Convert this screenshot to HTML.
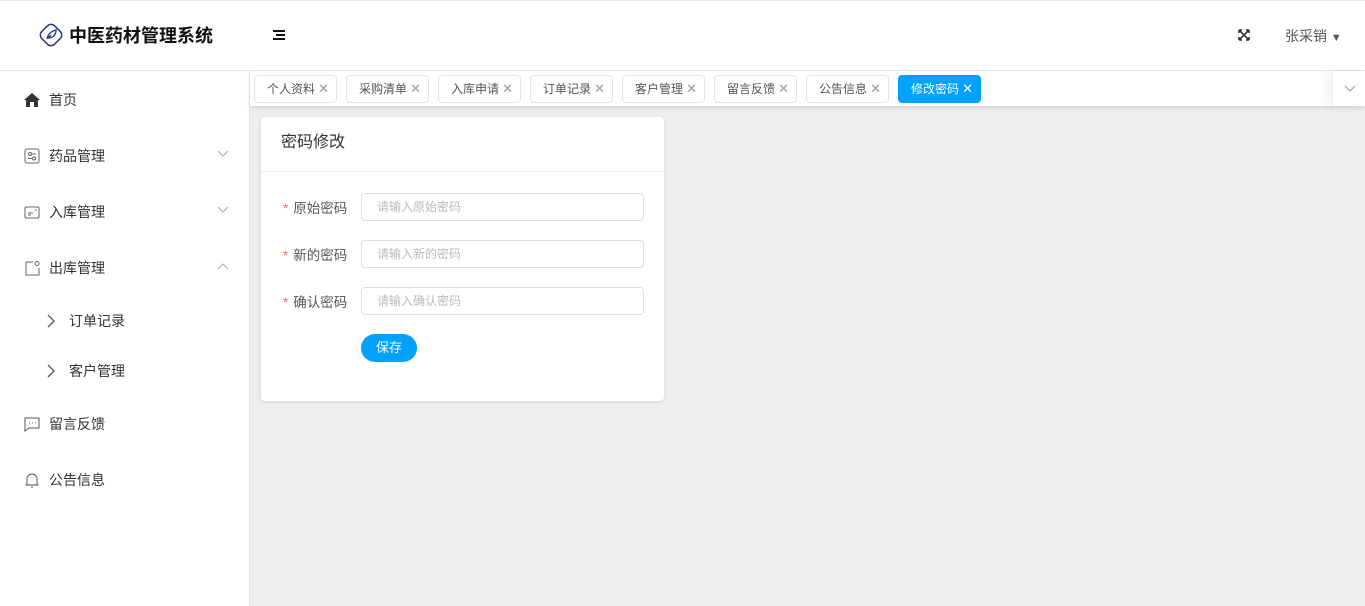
<!DOCTYPE html>
<html><head><meta charset="utf-8"><style>
*{box-sizing:border-box;margin:0;padding:0}
body{width:1365px;height:606px;overflow:hidden;font-family:"Liberation Sans","Noto Sans CJK SC",sans-serif;background:#eeeeee;position:relative;font-size:14px;color:#333}
.top{position:absolute;left:0;top:0;width:1365px;height:71px;background:#fff;border-top:1px solid #e6e6e6;border-bottom:1px solid #e6e6e6}
.side{position:absolute;left:0;top:71px;width:250px;height:535px;background:#fff;border-right:1px solid #e6e6e6}
.logo{position:absolute;left:35px;top:18px;display:flex;align-items:center;font-size:18px;font-weight:bold;color:#111}
.logo svg{margin-right:2px}
.item{position:absolute;left:24px;display:flex;align-items:center;font-size:14px;color:#333}
.item svg{margin-right:9px}
.arr{position:absolute;left:217px}
.tabs{position:absolute;left:250px;top:71px;width:1115px;height:35px;background:#fff;box-shadow:0 2px 4px rgba(0,0,0,.1)}
.tab{position:absolute;top:4px;height:28px;width:83px;border:1px solid #e4e4e4;border-radius:4px;font-size:12px;color:#555;line-height:26px;padding-left:12px;background:#fff}
.tab span{position:absolute;right:7px;top:0;color:#999;font-size:13px}
.tab.on{background:#00a2ff;border-color:#00a2ff;color:#fff}
.tab.on span{color:#fff}
.card{position:absolute;left:261px;top:117px;width:403px;height:284px;background:#fff;border-radius:4px;box-shadow:0 1px 4px rgba(0,0,0,.12)}
.card h3{font-weight:normal;font-size:16px;color:#333;height:55px;line-height:52px;padding-left:20px;border-bottom:1px solid #ebeef5}
.lab{position:absolute;left:22px;font-size:13.5px;color:#555}
.lab b{color:#f56c6c;font-weight:normal;margin-right:5px}
.inp{position:absolute;left:100px;width:283px;height:28px;border:1px solid #dcdfe6;border-radius:4px;font-size:12px;color:#bbb;line-height:26px;padding-left:15px}
.btn{position:absolute;left:100px;top:217px;width:56px;height:28px;border-radius:14px;background:#00a2ff;color:#fff;font-size:13px;text-align:center;line-height:28px}
</style></head><body>
<div class="top">
<div class="logo"><svg width="32" height="32" viewBox="0 0 32 32"><rect x="7" y="7" width="18" height="18" rx="5" transform="rotate(45 16 16)" fill="none" stroke="#2b3a7a" stroke-width="1.5"/><path d="M12 20 C13 14 17 12 21 11 C21 16 18 19 13 19 M13 19 L16 16" fill="none" stroke="#2b3a7a" stroke-width="1.4"/></svg>中医药材管理系统</div>
<div style="position:absolute;left:273px;top:29px;width:12px"><div style="height:2px;background:#111;margin-bottom:2px"></div><div style="height:2px;background:#111;margin:0 0 2px 3px"></div><div style="height:2px;background:#111"></div></div>
<svg style="position:absolute;left:1238px;top:28px" width="12" height="12" viewBox="0 0 12 12"><path d="M1 1L11 11M11 1L1 11M1 1h3M1 1v3M11 1h-3M11 1v3M1 11h3M1 11v-3M11 11h-3M11 11v-3" stroke="#333" stroke-width="1.6"/></svg>
<div style="position:absolute;left:1285px;top:25px;font-size:14px;color:#555">张采销 <span style="font-size:11px;color:#555">▼</span></div>
</div>
<div class="side">
<div class="item" style="top:19px"><svg width="16" height="14" viewBox="0 0 16 14"><path d="M8 0L0 7h2v7h4V9h4v5h4V7h2z" fill="#333"/></svg>首页</div>
<div class="item" style="top:75px"><svg width="16" height="16" viewBox="0 0 16 16"><rect x="1" y="1" width="14" height="14" rx="2" fill="none" stroke="#666"/><circle cx="6" cy="6" r="1.5" fill="none" stroke="#666"/><circle cx="10" cy="10.5" r="1.5" fill="none" stroke="#666"/><path d="M4 10.5h4M8 6h4" stroke="#666"/></svg>药品管理</div>
<svg class="arr" style="top:79px" width="12" height="8" viewBox="0 0 12 8"><path d="M1 1l5 5 5-5" fill="none" stroke="#aab" stroke-width="1"/></svg>
<div class="item" style="top:131px"><svg width="16" height="16" viewBox="0 0 16 16"><rect x="1" y="3" width="14" height="11" rx="1.5" fill="none" stroke="#666"/><path d="M4 9h5M4 11h3M11 6h2" stroke="#666"/></svg>入库管理</div>
<svg class="arr" style="top:135px" width="12" height="8" viewBox="0 0 12 8"><path d="M1 1l5 5 5-5" fill="none" stroke="#aab" stroke-width="1"/></svg>
<div class="item" style="top:187px"><svg width="16" height="16" viewBox="0 0 16 16"><path d="M9 2H2v13h13V8" fill="none" stroke="#666"/><circle cx="13" cy="3.5" r="2" fill="none" stroke="#666"/></svg>出库管理</div>
<svg class="arr" style="top:192px" width="12" height="8" viewBox="0 0 12 8"><path d="M1 6l5-5 5 5" fill="none" stroke="#aab" stroke-width="1"/></svg>
<div class="item" style="top:240px;left:47px"><svg width="8" height="14" viewBox="0 0 8 14"><path d="M1 1l6 6-6 6" fill="none" stroke="#555" stroke-width="1.3"/></svg><span style="margin-left:5px">订单记录</span></div>
<div class="item" style="top:290px;left:47px"><svg width="8" height="14" viewBox="0 0 8 14"><path d="M1 1l6 6-6 6" fill="none" stroke="#555" stroke-width="1.3"/></svg><span style="margin-left:5px">客户管理</span></div>
<div class="item" style="top:343px"><svg width="16" height="16" viewBox="0 0 16 16"><path d="M1 2h14v10H5l-4 3z" fill="none" stroke="#555"/><path d="M5 7h1M8 7h1M11 7h1" stroke="#555"/></svg>留言反馈</div>
<div class="item" style="top:399px"><svg width="16" height="16" viewBox="0 0 16 16"><path d="M3 13V7a5 5 0 0 1 10 0v6M1.5 13h13M7 15h2" fill="none" stroke="#555"/></svg>公告信息</div>
</div>
<div class="tabs">
<div class="tab" style="left:4px">个人资料<span>✕</span></div>
<div class="tab" style="left:96px">采购清单<span>✕</span></div>
<div class="tab" style="left:188px">入库申请<span>✕</span></div>
<div class="tab" style="left:280px">订单记录<span>✕</span></div>
<div class="tab" style="left:372px">客户管理<span>✕</span></div>
<div class="tab" style="left:464px">留言反馈<span>✕</span></div>
<div class="tab" style="left:556px">公告信息<span>✕</span></div>
<div class="tab on" style="left:648px">修改密码<span>✕</span></div>
<div style="position:absolute;right:0;top:0;width:33px;height:35px;border-left:1px solid #eee;box-shadow:-6px 0 8px rgba(0,0,0,.05)"><svg style="position:absolute;left:11px;top:14px" width="12" height="8" viewBox="0 0 12 8"><path d="M1 1l5 5 5-5" fill="none" stroke="#999" stroke-width="1.1"/></svg></div>
</div>
<div class="card">
<h3>密码修改</h3>
<div class="lab" style="top:80px"><b>*</b>原始密码</div><div class="inp" style="top:76px">请输入原始密码</div>
<div class="lab" style="top:127px"><b>*</b>新的密码</div><div class="inp" style="top:123px">请输入新的密码</div>
<div class="lab" style="top:174px"><b>*</b>确认密码</div><div class="inp" style="top:170px">请输入确认密码</div>
<div class="btn">保存</div>
</div>
</body></html>
